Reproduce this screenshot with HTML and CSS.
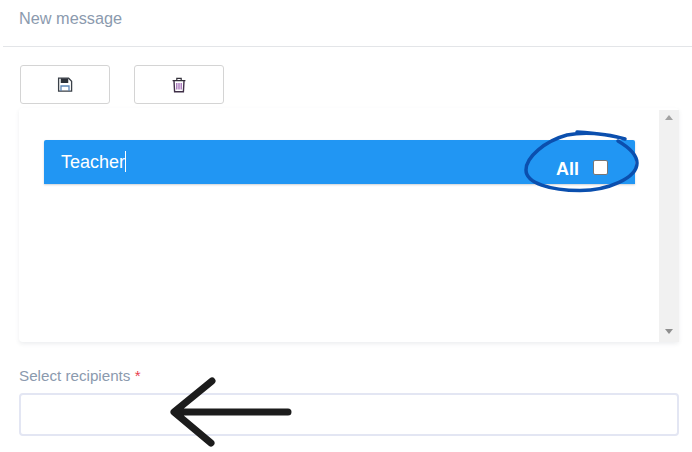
FILE: index.html
```html
<!DOCTYPE html>
<html lang="en">
<head>
<meta charset="utf-8">
<title>New message</title>
<link rel="stylesheet" href="styles.css">
</head>
<body>
<div class="page">
  <header class="head"><h1 class="title">New message</h1></header>
  <div class="toolbar">
    <button class="tool" type="button" aria-label="Save">
      <svg width="16" height="16" viewBox="0 0 16 16" fill="none" stroke="#2b3038" stroke-width="1.3">
        <path d="M1.6 1.2h10l3 3v9.900H1.600z" fill="#fff" stroke="#3a4048"/>
        <path d="M4.400 1.400v4h6.200v-4" fill="#2b3038"/>
        <path d="M4 14V9h8v5" stroke="#5d86b5"/>
      </svg>
    </button>
    <button class="tool" type="button" aria-label="Delete">
      <svg width="16" height="16" viewBox="0 0 16 16" fill="none" stroke="#33303a" stroke-width="1.2">
        <path d="M1.600 3.600h12.800M5.800 3.400V1.400h4.400v2"/>
        <path d="M3 3.800l.6 11h8.800l.6-11" stroke="#3f2f48" stroke-width="1.4"/>
        <path d="M5.800 6v6.600M8 6v6.600M10.200 6v6.600" stroke="#9a5fb0"/>
      </svg>
    </button>
  </div>
  <section class="panel">
    <div class="list">
      <div class="group">
        <span class="group-name">Teacher<span class="caret"></span></span>
        <label class="all"><span class="all-text">All</span><span class="check"></span></label>
      </div>
    </div>
    <div class="scrollbar">
      <span class="arrow up"></span>
      <span class="arrow down"></span>
    </div>
  </section>
  <div class="field">
    <div class="label">Select recipients <span class="req">*</span></div>
    <div class="input"></div>
  </div>
</div>
<svg class="ink" width="692" height="452" viewBox="0 0 692 452" fill="none" stroke-linecap="round" stroke-linejoin="round">
  <path class="ink-blue" d="M577 132C592 133 612 135 625 139C606 133 583 132 567 135C545 141 526 157 526 170C526 183 550 190.500 580 190.500C608 190.500 637 178 637 163C637 155 630 148 618 141"/>
  <path class="ink-black" d="M288 412H175M212 381L174 412L211 443"/>
</svg>
</body>
</html>
```
FILE: styles.css
```css
* { box-sizing: border-box; }
html, body { margin: 0; padding: 0; background: #fff; }
body { width: 692px; height: 452px; overflow: hidden; position: relative; font-family: "Liberation Sans", Arial, sans-serif; }
.page { padding-left: 3px; }
.head { height: 47px; padding: 9px 0 0 16px; border-bottom: 1px solid #e3e5e8; }
.title { margin: 0; font-size: 16.300px; line-height: 18px; font-weight: 400; color: #8b9aae; }
.toolbar { display: flex; gap: 24px; padding: 18px 0 0 17px; }
.tool { width: 90px; height: 39px; padding: 0; display: flex; align-items: center; justify-content: center; background: #fff; border: 1px solid #d4d4d4; border-radius: 3px; }
.panel { display: flex; width: 660px; height: 234px; margin: 4px 0 0 16px; background: #fff; border-radius: 4px; box-shadow: 0 2px 4px rgba(60, 70, 90, 0.09); }
.list { flex: 1; padding: 32px 24px 0 25px; }
.group { height: 44px; display: flex; align-items: flex-start; justify-content: space-between; padding: 0 27px 0 17px; background: #2196f3; border-radius: 2px 2px 0 0; box-shadow: 0 1px 2px rgba(60, 70, 90, 0.25); color: #fff; }
.group-name { display: flex; align-items: center; font-size: 18px; line-height: 20px; margin-top: 11px; }
.caret { width: 1px; height: 21px; background: #fff; }
.all { display: flex; align-items: flex-start; gap: 14px; font-size: 18px; line-height: 20px; font-weight: 700; }
.all-text { margin-top: 19px; }
.check { width: 15px; height: 15px; margin-top: 20px; background: #fff; border: 1px solid #767676; border-radius: 2px; }
.scrollbar { width: 20px; margin-top: 2px; display: flex; flex-direction: column; justify-content: space-between; align-items: center; padding: 5px 0 7px; background: #f1f1f1; }
.arrow { width: 0; height: 0; border-left: 4px solid transparent; border-right: 4px solid transparent; }
.up { border-bottom: 5px solid #a3a3a3; }
.down { border-top: 5px solid #8f8f8f; margin-bottom: 1px; }
.field { margin: 25px 0 0 16px; }
.label { font-size: 15.200px; line-height: 17px; color: #8b9aae; }
.req { color: #e8424f; }
.input { width: 660px; height: 43px; margin-top: 9px; background: #fff; border: 2px solid #e3e6f3; border-radius: 4px; }
.ink { position: absolute; left: 0; top: 0; pointer-events: none; }
.ink-blue { stroke: #0b4fae; stroke-width: 3.500; }
.ink-black { stroke: #1c1c1c; stroke-width: 7; }
```
